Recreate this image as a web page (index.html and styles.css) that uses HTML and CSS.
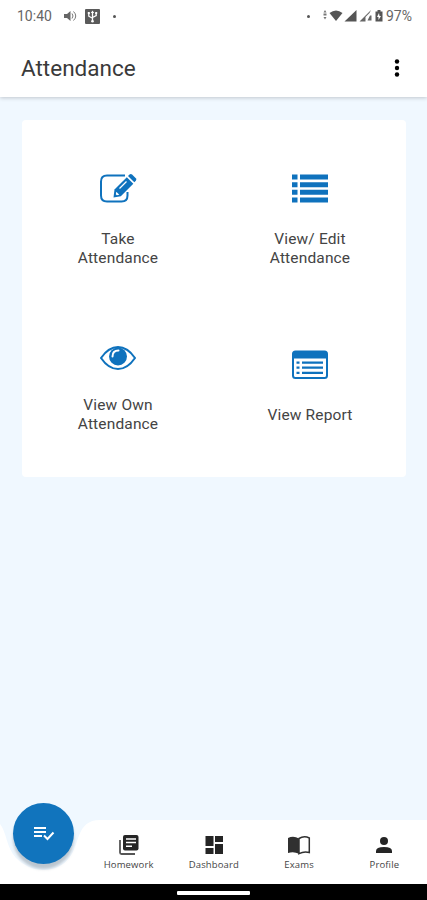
FILE: index.html
```html
<!DOCTYPE html>
<html lang="en">

<head>
    <meta charset="UTF-8">
    <meta name="viewport" content="width=device-width, initial-scale=1.0">
    <title>Attendance</title>
    <link rel="stylesheet" href="styles.css">
</head>

<body>
    <div class="app">
        <header class="header">
            <div class="status">
                <span class="time">10:40</span>
                <svg class="sound" width="14" height="12" viewBox="0 0 14 12">
                    <path d="M1 4h3l3.500-3v10L4 8H1z" fill="#666" />
                    <path d="M9 3.500q2 2.500 0 5M10.500 1.500q4.500 4.500 0 9" fill="none" stroke="#777" />
                </svg>
                <svg class="usb" width="15" height="15" viewBox="0 0 15 15">
                    <rect width="15" height="15" rx="1" fill="#5a5a5a" />
                    <path d="M7.500 12V3M3.800 4v3.200l3.700 2M11.200 4v2.500l-3.700 2" fill="none" stroke="#fff" stroke-width="1.300" />
                    <circle cx="7.500" cy="12.200" r="1.300" fill="#fff" />
                    <path d="M5.800 4l1.700-2.500L9.200 4zM2.800 3h2v2h-2zM10.200 3h2v2h-2z" fill="#fff" />
                </svg>
                <i class="dot"></i>
                <i class="dot dot-right"></i>
                <svg class="signals" width="62" height="14" viewBox="0 0 62 14">
                    <g fill="#555">
                        <path d="M3 1l1.500 2.500h-3zM1.500 4.500h3v2h-3zM3 10.500L1.500 8h3z" fill="#777" />
                        <path d="M7.500 4q6.500-5 13 0L14 12z" />
                        <path d="M34.500 1v11.500H22.500z" />
                        <path d="M49 1L37.500 12.500h6V8l4-4zM48 6.500h1.500v5h-4z" fill="#666" />
                        <path d="M55.500 1h3v1.500h2v10h-7v-10h2zM57 4l-2 4h1.500v3L59 7h-1.500z" fill-rule="evenodd" />
                    </g>
                </svg>
                <span class="battery">97%</span>
            </div>
            <div class="title-bar">
                <h1>Attendance</h1>
                <svg class="more" width="6" height="18" viewBox="0 0 6 18">
                    <circle cx="3" cy="2.500" r="2.200" />
                    <circle cx="3" cy="9" r="2.200" />
                    <circle cx="3" cy="15.500" r="2.200" />
                </svg>
            </div>
        </header>

        <main>
            <div class="card">
                <a class="item">
                    <svg width="38" height="32" viewBox="0 0 38 32">
                        <path d="M26 2.500H8Q2 2.500 2 8.500v14q0 6 6 6h14.500q6 0 6-6V19" fill="none" stroke="#0f72bd" stroke-width="2" />
                        <path d="M14.500 24.500l1-8L27.800 4.200l6.500 6.500L21.800 23.200z" fill="#0f72bd" />
                        <path d="M29 3l1.500-1.500q1.300-1.200 2.600 0l3.700 3.700q1.200 1.300 0 2.600l-1.500 1.500z" fill="#0f72bd" />
                        <path d="M17.300 18.800l3 3-2.500.500-1-1z" fill="#fff" />
                        <path d="M20.500 15.500l7-7" stroke="#fff" stroke-width="1.200" />
                    </svg>
                    <p>Take<br>Attendance</p>
                </a>
                <a class="item">
                    <svg width="38" height="32" viewBox="0 0 38 32" fill="#0f72bd">
                        <path d="M1 1.500h5.500v5H1zM9 1.500h28v5H9zM1 9.200h5.500v5H1zM9 9.200h28v5H9zM1 16.800h5.500v5H1zM9 16.800h28v5H9zM1 24.500h5.500v5H1zM9 24.500h28v5H9z" />
                    </svg>
                    <p>View/ Edit<br>Attendance</p>
                </a>
                <a class="item">
                    <svg width="38" height="32" viewBox="0 0 38 32">
                        <path d="M2 16Q9.500 5 19 5T36 16Q28.500 27 19 27T2 16z" fill="#fff" stroke="#0f72bd" stroke-width="2" />
                        <circle cx="19" cy="14.500" r="9" fill="#0f72bd" />
                        <path d="M13.500 14.500q0-6 6-6" fill="none" stroke="#fff" stroke-width="2" stroke-linecap="round" />
                    </svg>
                    <p>View Own<br>Attendance</p>
                </a>
                <a class="item">
                    <svg width="38" height="32" viewBox="0 0 38 32">
                        <rect x="2" y="2.500" width="34" height="26.500" rx="2.500" fill="#fff" stroke="#0f72bd" stroke-width="2" />
                        <path d="M2 3h34v6.500H2z" fill="#0f72bd" />
                        <path d="M5.500 13.700h3M5.500 18.700h3M5.500 23.900h3M11 13.700h21M11 18.700h21M11 23.900h21" stroke="#0f72bd" stroke-width="2.200" />
                    </svg>
                    <p>View Report</p>
                </a>
            </div>
        </main>

        <footer>
            <svg class="bar" width="427" height="64" viewBox="0 0 427 64">
                <path d="M0 4C7 13 6 27 16 38Q28 50 43 50Q60 50 69 38C80 25 76 0 100 0H427V64H0z" fill="#fff" />
            </svg>
            <div class="fab">
                <svg width="22" height="18" viewBox="0 0 22 18">
                    <path d="M1 3h12M1 7h12M1 11h8" stroke="#fff" stroke-width="2" />
                    <path d="M11 10.500l3.500 3.500 6-6.500" fill="none" stroke="#fff" stroke-width="2" />
                </svg>
            </div>
            <nav>
                <a>
                    <svg width="22" height="22" viewBox="0 0 22 22">
                        <path d="M2 6v12.500q0 1.500 1.500 1.500H17" fill="none" stroke="#555" stroke-width="1.800" />
                        <rect x="5" y="1" width="15.500" height="15.500" rx="2" fill="#252525" />
                        <path d="M8 5h10M8 8.600h10M8 12.300h6" stroke="#fff" stroke-width="1.500" />
                    </svg>
                    <span>Homework</span>
                </a>
                <a>
                    <svg width="22" height="22" viewBox="0 0 22 22" fill="#252525">
                        <path d="M2.500 2h8v10h-8zM12 2h8v6h-8zM2.500 14h8v6h-8zM12 10h8v10h-8z" />
                    </svg>
                    <span>Dashboard</span>
                </a>
                <a>
                    <svg width="24" height="22" viewBox="0 0 24 22">
                        <path d="M12 4.500Q6.500 1.500 1 4v15q5.500-2 11 .700z" fill="#303030" />
                        <path d="M12 4.500Q17 1.500 22.300 4v14.500Q17 17 12 19.700z" fill="#fff" stroke="#303030" stroke-width="1.500" />
                    </svg>
                    <span>Exams</span>
                </a>
                <a>
                    <svg width="22" height="22" viewBox="0 0 22 22" fill="#252525">
                        <circle cx="11" cy="7" r="4" />
                        <path d="M3 19v-2q0-4 8-4t8 4v2z" />
                    </svg>
                    <span>Profile</span>
                </a>
            </nav>
        </footer>
        <div class="home"><i></i></div>
    </div>
</body>

</html>
```

FILE: styles.css
```css
* {
    margin: 0;
    padding: 0;
    box-sizing: border-box;
}

body {
    background: #f0f8ff;
    color: #444;
    font-family: Roboto, sans-serif;
}

svg {
    display: block;
    flex-shrink: 0;
}

.app {
    display: flex;
    flex-direction: column;
    height: 900px;
    overflow: hidden;
}

.header {
    height: 97px;
    background: #fff;
    box-shadow: 0 1px 4px rgba(0, 0, 0, 0.2);
}

.status {
    display: flex;
    align-items: center;
    height: 32px;
    padding: 0 15px 0 17px;
    font-size: 14px;
    color: #666;
}

.time {
    width: 36px;
}

.sound {
    margin-left: 10px;
}

.usb {
    margin-left: 8px;
}

.dot {
    width: 3px;
    height: 3px;
    margin-left: 13px;
    border-radius: 50%;
    background: #555;
}

.dot-right {
    margin-left: auto;
    margin-right: 12px;
}

.battery {
    margin-left: 2px;
}

.title-bar {
    display: flex;
    justify-content: space-between;
    align-items: center;
    height: 72px;
    padding: 0 27px 0 21px;
}

.title-bar h1 {
    font-size: 22.5px;
    font-weight: 400;
    color: #3a3a3a;
}

main {
    flex: 1;
    padding: 23px 21px 0 22px;
}

.card {
    display: grid;
    grid-template-columns: 192px 192px;
    grid-template-rows: 190px 167px;
    height: 357px;
    border-radius: 4px;
    background: #fff;
}

.item {
    display: flex;
    flex-direction: column;
    align-items: center;
    padding-top: 53px;
}

.item:nth-child(3) {
    padding-top: 32px;
}

.item:nth-child(4) {
    padding-top: 39px;
}

.item p {
    margin-top: 25px;
    font-size: 15.5px;
    line-height: 18.5px;
    letter-spacing: 0.15px;
    text-align: center;
}

.item:nth-child(3) p {
    margin-top: 22px;
}

footer {
    position: relative;
    height: 64px;
}

.bar {
    position: absolute;
    left: 0;
    top: 0;
}

.fab {
    position: absolute;
    left: 13px;
    top: -17px;
    display: flex;
    align-items: center;
    justify-content: center;
    width: 61px;
    height: 61px;
    border-radius: 50%;
    background: #1174bd;
    box-shadow: 0 5px 3px rgba(90, 105, 120, 0.35);
}

nav {
    position: relative;
    display: grid;
    grid-template-columns: repeat(4, 1fr);
    margin-left: 86px;
    padding-top: 14px;
}

nav span {
    margin-top: 2px;
    font: 9.5px/13px "Open Sans", sans-serif;
    letter-spacing: 0.15px;
}

nav a {
    display: flex;
    flex-direction: column;
    align-items: center;
}

.home {
    position: relative;
    display: flex;
    justify-content: center;
    height: 16px;
    padding-top: 7px;
    background: #000;
}

.home i {
    width: 73px;
    height: 4px;
    border-radius: 1px;
    background: #fff;
}
```
